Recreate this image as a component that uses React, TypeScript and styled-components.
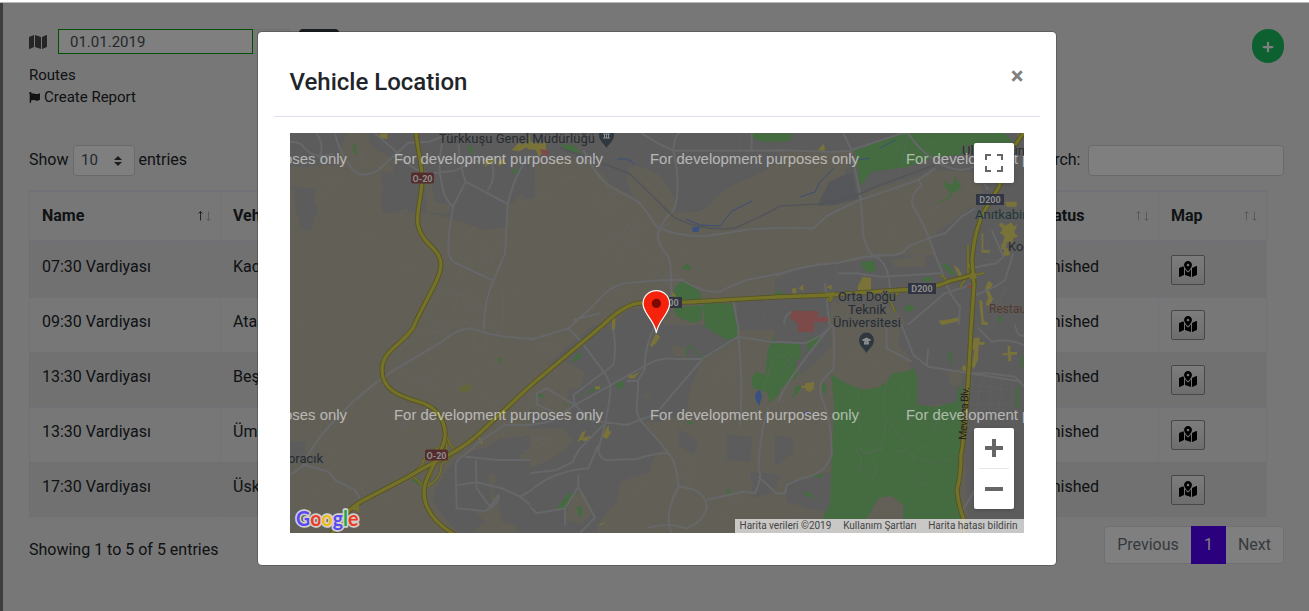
import React from 'react';
import styled, { createGlobalStyle, css } from 'styled-components';
import { FaMap, FaFlag, FaPlus, FaMapMarkedAlt } from 'react-icons/fa';

const GlobalStyle = createGlobalStyle`
  *, *::before, *::after { box-sizing: border-box; }
  html, body { margin: 0; height: 611px; overflow: hidden; }
  body {
    font-family: Roboto, 'Liberation Sans', sans-serif;
    font-size: 16px;
    line-height: 24px;
    color: #212529;
    background: #fff;
  }
`;

const Screen = styled.div`
  display: flex;
  flex-direction: column;
  width: 1309px;
  height: 611px;
  border-top: 2px solid #fff;
`;

const Frame = styled.div`
  position: relative;
  flex: 1;
  display: flex;
  border-top: 1px solid #b9b9b9;
  overflow: hidden;
`;

const Rail = styled.div`
  width: 3px;
  background: #7c7a78;
`;

const Page = styled.main`
  flex: 1;
  padding: 26px 25px 0 26px;
  background: #efefef;
`;

const TopRow = styled.div`
  display: flex;
  justify-content: space-between;
  align-items: flex-start;
  height: 34px;
`;

const DateGroup = styled.div`
  display: flex;
  align-items: flex-start;
`;

const MapGlyph = styled(FaMap)`
  width: 18px;
  height: 16px;
  margin: 5px 11px 0 0;
  color: #4a4a4c;
`;

const DateInput = styled.div`
  width: 195px;
  height: 25px;
  padding: 0 11px;
  border: 1px solid #00a000;
  background: #fff;
  color: #495057;
  font-size: 15px;
  line-height: 24px;
`;

const DateAddon = styled.div`
  width: 37px;
  height: 25px;
  border: 1px solid #dcdde6;
  border-left: 0;
`;

const DarkButton = styled.div`
  width: 40px;
  height: 25px;
  margin-left: 9px;
  border-radius: 4px;
  background: #343a40;
`;

const AddButton = styled.button`
  display: flex;
  align-items: center;
  justify-content: center;
  width: 32px;
  height: 34px;
  padding: 2px 0 0;
  border: 0;
  border-radius: 17px;
  background: #1ac15f;
  color: #fff;
  font-size: 12px;
`;

const Menu = styled.div`
  padding-top: 1px;
`;

const MenuLine = styled.div`
  display: flex;
  align-items: center;
  gap: 4px;
  height: 22px;
  font-size: 15px;
`;

const FlagGlyph = styled(FaFlag)`
  width: 11px;
  height: 11px;
`;

const Controls = styled.div`
  display: flex;
  justify-content: space-between;
  align-items: flex-start;
  height: 31px;
  margin-top: 37px;
  line-height: 29px;
`;

const Field = styled.label<{ $gap: number }>`
  display: flex;
  gap: ${p => p.$gap}px;
  height: 31px;
`;

const LengthSelect = styled.span`
  display: flex;
  align-items: center;
  justify-content: space-between;
  width: 62px;
  height: 31px;
  margin-right: -1px;
  padding: 0 12px 0 7px;
  border: 1px solid #ced4da;
  border-radius: 4px;
  background: #fff;
  color: #495057;
  font-size: 15px;
`;

const SearchBox = styled.span`
  width: 196px;
  height: 31px;
  border: 1px solid #ced4da;
  border-radius: 4px;
  background: #fff;
`;

const Table = styled.table`
  width: 1238px;
  margin-top: 14px;
  table-layout: fixed;
  border-collapse: separate;
  border-spacing: 0;
  border: 1px solid #e3e3ef;
  border-width: 1px 1px 0 0;
`;

const HeadCell = styled.th<{ $w: number }>`
  width: ${p => p.$w}px;
  height: 51px;
  padding: 0 8px 1px 12px;
  border: solid #e3e3ef;
  border-width: 1px 0 2px 1px;
  text-align: left;
  font-weight: 700;
`;

const HeadInner = styled.div`
  display: flex;
  align-items: center;
  justify-content: space-between;
`;

const Cell = styled.td<{ $inset?: number }>`
  height: 55px;
  padding: 12px 12px 0 ${p => p.$inset ?? 12}px;
  vertical-align: top;
  border: solid #e3e3ef;
  border-width: 1px 0 0 1px;
  white-space: nowrap;
`;

const Row = styled.tr<{ $striped: boolean }>`
  ${p => p.$striped && css`
    background: #e3e3e3;
    ${Cell} { border-color: #e1e1e4; }
  `}
`;

const MapButton = styled.button`
  display: flex;
  align-items: center;
  justify-content: center;
  width: 34px;
  height: 30px;
  margin: 0;
  padding: 0;
  border: 1px solid #8f8f8f;
  border-radius: 2px;
  background: linear-gradient(#f8f8f8, #dcdcdc);
  color: #000;
  svg { width: 18px; height: 16px; margin-top: -2px; }
`;

const Footer = styled.div`
  display: flex;
  justify-content: space-between;
  align-items: flex-start;
  margin-top: 9px;
`;

const Info = styled.div`
  padding-top: 12px;
`;

const Pager = styled.div`
  display: flex;
  height: 38px;
`;

const PageLink = styled.div<{ $active?: boolean; $w: number; $side?: 'left' | 'right' }>`
  width: ${p => p.$w}px;
  height: 38px;
  border: 1px solid #dee0ea;
  border-left-width: ${p => (p.$side === 'left' ? 1 : 0)}px;
  border-right-width: ${p => (p.$side === 'right' ? 1 : 0)}px;
  border-radius: ${p => (p.$side === 'left' ? '4px 0 0 4px' : p.$side === 'right' ? '0 4px 4px 0' : '0')};
  background: #fff;
  color: #6c757d;
  text-align: center;
  line-height: 36px;
  ${p => p.$active && css`
    background: #5600ff;
    border-color: #5600ff;
    color: #fff;
  `}
`;

const Backdrop = styled.div`
  position: absolute;
  inset: 0;
  display: flex;
  align-items: flex-start;
  padding: 28px 0 0 257px;
  background: rgba(0, 0, 0, 0.5);
`;

const Modal = styled.section`
  width: 800px;
  padding: 16px;
  background: #fff;
  background-clip: padding-box;
  border: 1px solid rgba(0, 0, 0, 0.2);
  border-radius: 5px;
`;

const ModalHeader = styled.header`
  display: flex;
  justify-content: space-between;
  height: 69px;
  padding: 16px;
  border-bottom: 1px solid #dfe0ea;
`;

const ModalTitle = styled.h4`
  margin: 0 0 0 -0.5px;
  font-size: 24px;
  font-weight: 500;
  line-height: 36px;
`;

const CloseButton = styled.span`
  margin-right: 0.5px;
  font-size: 24px;
  font-weight: 700;
  line-height: 24px;
  color: #808080;
`;

const ModalBody = styled.div`
  padding: 16px;
`;

const MapArea = styled.div`
  position: relative;
  width: 734px;
  height: 400px;
  overflow: hidden;
`;

const MapSvg = styled.svg`
  display: block;
`;

const MapControl = styled.div<{ $top: number; $h: number }>`
  position: absolute;
  right: 10px;
  top: ${p => p.$top}px;
  width: 40px;
  height: ${p => p.$h}px;
  display: flex;
  flex-direction: column;
  align-items: center;
  justify-content: center;
  background: #fff;
  border-radius: 2px;
  box-shadow: 0 1px 4px -1px rgba(0, 0, 0, 0.3);
`;

const ZoomStep = styled.div`
  display: flex;
  align-items: center;
  justify-content: center;
  width: 30px;
  height: 40px;
  & + & { border-top: 1px solid #e6e6e6; height: 41px; }
`;

const Attribution = styled.div`
  position: absolute;
  right: 0;
  bottom: 0;
  display: flex;
  align-items: center;
  justify-content: space-between;
  width: 289px;
  height: 14px;
  padding: 0 6.5px 0 4.5px;
  background: rgba(245, 245, 245, 0.7);
  color: #444;
  font-size: 10px;
  line-height: 14px;
  white-space: nowrap;
`;

const SortIcon = ({ asc = false }: { asc?: boolean }) => (
  <svg width="15" height="14" viewBox="0 0 15 14" fill="none" strokeWidth="1">
    <path d="M3.5 11.5V2.5M1.5 4.5l2-2 2 2" stroke={asc ? '#44444e' : '#b4b4ba'} />
    <path d="M11.5 2.5v9M9.5 9.5l2 2 2-2" stroke="#b4b4ba" />
  </svg>
);

type Sector = {
  x: number;
  y: number;
  urban: string[];
  land?: string[];
  park: string[];
  patch?: string[];
  roads: string[];
  streets: string[];
};

/* The map is stored as six sectors, each drawn at three units per pixel. */
const sectors: Sector[] = [
  {
    x: 285, y: 130,
    urban: [
      'M15 10H750V200L715 210V185L690 212L665 230V290L600 300L540 280L440 250H380L360 235L330 250H290L292 130L270 115L200 115H95V170L50 165L15 180Z',
      'M30 165L95 170L85 210L100 235L75 300L50 297L30 230Z',
    ],
    land: ['M185 10H245L260 50L330 90L325 130L200 118L150 110L165 60ZM15 110L60 112L120 105L190 118L190 175H60L15 170ZM415 120L435 130L450 215L505 225L490 250L425 248Z'],
    park: ['M205 40l8 0 0 20 8 12-8 2-8-10zM550 48h12l2 22h-12zM685 118h15v12h-18z'],
    patch: ['M285 12l22-2 0 18-25-6zM600 85l20-5 10 12-30 18zM640 95l15-10 5 14-20 10zM680 60l15-15 5-8 15 8-5-20 25-10 12 12-2 45-20-20-22 12z'],
    roads: [
      'M15 35Q50 35 58 55L80 72Q115 85 145 70',
      'M95 10Q120 50 102 85M150 10Q160 60 200 115Q230 150 280 120L370 38L430 36L500 10',
      'M270 10L345 75Q370 120 440 130L510 122Q570 90 640 78',
      'M475 30Q455 90 470 160Q480 215 505 228',
      'M520 40Q525 110 542 155L668 222Q695 110 750 60M542 155L505 228Q490 300 490 360Q492 395 525 405L625 452L660 372L668 222',
      'M607 183Q635 145 620 95M625 452Q595 520 597 600',
    ],
    streets: [
      'M30 120l25-12 10 15M100 150l30-10 30 20 25-12M105 195l12-8 5 16 18-8M120 165l30 12 15-20M290 190l12-28M370 235l-30 30',
      'M217 312v12h55v-16M105 335l16 12-4 45M345 400l28 24 12-18M55 570l-40 20M300 265v30h-18M625 452L655 480L657 600',
      'M565 290l-18 32 170 42M580 345l-40 75M610 320l-35 120M640 340l-38 90M548 375l100 35M530 410l-22 50M465 485l135 20M520 480l-15 80M560 490l-35 110M680 470l25 25M735 200l-25 40',
      'M425 570l40-90M440 590l60-20 70 12 60-8M470 600l10-40M535 480v60l80-12M670 510l45-15M225 60l20 60M205 90l35-10',
    ],
  },
  {
    x: 530, y: 130,
    urban: [
      'M0 10H750V95L690 130L610 165L570 190L530 235L500 245L430 250L440 215L390 135L330 108L295 112L290 160L310 200L240 160L190 100L100 80L0 110Z',
      'M220 600L300 538L400 535V600ZM620 515L750 505V600H620Z',
    ],
    park: [
      'M435 470Q450 450 480 458L512 490L515 515L475 520L430 515ZM430 535L505 525L520 530L515 570L490 580L440 560ZM520 520H605L625 600H525Z',
      'M90 42L130 45L155 70L110 62ZM668 10H750V35L700 35L668 25ZM455 412l20-12 10 18-22 2z',
    ],
    patch: ['M0 35h48v25l-22 20-8-20-18-2zM246 565h10v35h-10zM418 498l10-12 12 14z'],
    roads: [
      'M335 10Q390 45 430 62H750M430 62Q435 10 450 10M430 62Q455 170 432 240Q400 265 385 310Q375 330 415 380Q425 400 424 500',
      'M160 60Q190 130 240 170L325 215Q350 245 380 290Q440 320 530 318Q620 305 660 298L750 293',
      'M110 600Q200 520 215 500Q250 460 300 458L395 450H455Q520 490 570 485Q620 460 650 450L750 430',
      'M130 570l80-20M610 510L625 600M665 10v50',
    ],
    streets: [
      'M380 278q18 14 38 0q-6 18 4 34q-22-10-42 0q8-18 0-34zM383 275l36 38M419 275l-36 38M403 432q20 12 38 0q-6 16 2 34q-20-10-40 0q8-18 0-34zM405 430l36 36M441 430l-36 36',
      'M80 160l10-18 80-5M60 200l-55-15M200 220l20-60 50 60-28 40-40-30 50-20M160 90l-60-18M210 385l130-150M240 390l130-120M200 350l100-60 60 100M280 330l60 40M210 390l60-150M300 260l60 60M260 400l50-110M355 400l50-40-20 75-25-15M425 390l40-25 30 40M650 450l70-10-40 50',
      'M0 250l20 20M40 310l10 30M450 230l20 20M500 250l20-10M130 420l20-10M230 500l40-30 30 40M240 530l50-50M335 110l70 70M630 10v50M700 190l-40 40M640 540l60-20v60',
    ],
  },
  {
    x: 775, y: 130,
    urban: [
      'M0 10H747V600H400L380 560L340 530L170 515L160 600H0V450L80 410L240 395L330 375L480 375L495 420L430 260L600 230L620 220V130L480 120L370 165L240 210L200 150L240 60L130 70L0 60Z',
    ],
    land: ['M265 185L480 125H590V230L540 270L490 300L470 330L485 375L330 375L290 360L262 300ZM170 520L340 530L385 560L390 600H165ZM350 390L450 375V410H355Z'],
    park: [
      'M240 60Q350 15 390 10H690L720 45L640 50L560 75L480 80L400 110L290 125L255 170Z',
      'M510 150L520 162L533 163L540 138L547 155L558 160L556 175L540 190L530 182L528 200L512 212L480 220L515 205L525 190L518 180L508 168ZM260 395L298 393L303 420L285 430L262 415ZM500 405L515 400L540 430L528 435ZM445 442h26v12h-28zM385 535l15-12 20 12-18 12zM0 10H48V32L0 36ZM0 485h22v12H0zM665 570l8-12 10 5-12 18z',
    ],
    patch: [
      'M127 60l20-18 3 22zM248 470l15-30 25 3v40l-38 2zM52 475h12v15h-12zM70 475l15-12v20zM155 470l15-5v15zM160 510l15-22 12 10zM690 215h35v15h-30zM672 285l8-8 10 10 20-10 5 12 12-4-10 22 12 12-14 6-6 26-12-14-14 4 6-22-14-10 8-12zM680 340h16l-4 14 14 2-2 20-20 2 4-18-10-4zM620 310h5v50h20v8h-25zM535 405l15 10 20 35-15-4zM490 572l35-4 25-6v12l-20 4-30 8zM640 452l14 10-12 20 12 25-10 22-12-5 8-20-10-28zM612 510l10 2 4 60 14 8-10 20h-8zM728 12h15v12h-15z',
    ],
    roads: [
      'M0 60L170 66L225 62Q245 130 258 210L265 320Q280 375 310 385Q345 410 345 490',
      'M205 10L230 60L380 10L400 10Q430 60 480 90Q540 135 600 110',
      'M0 293L115 295L160 255L250 212L430 150L480 115M430 150L440 165Q400 200 415 230Q440 270 460 320L510 450Q520 490 555 530L550 600',
      'M0 437Q80 405 190 398L270 380L340 375Q380 380 400 350L460 325L510 310L560 260L600 235',
      'M190 430H240L320 440L500 430M620 150L640 180M665 400Q600 410 580 420M665 400L685 380L650 300M715 370L690 450Q650 480 600 495M720 365Q740 350 747 345',
      'M150 460L165 600M380 600L510 490L600 460M30 600Q20 560 50 545',
    ],
    streets: [
      'M60 270l25-30 40 10 10 35-45-10 5-40M320 280l20 10 25-20-5 55-20-15M460 240l30-8-10 20M300 240l40-20M390 380l70-8M300 530l40-5 30 50M610 420v-60h90M620 390h60M620 310v70M640 300v80M680 350h40M690 220v40M650 540l60-80M650 600l40-130M590 520v60M390 20l-60 90M430 30l60 70',
      'M580 90l60 20M450 30l50 20M274 364q18 14 40 2q-4 12 2 24q-20-8-42 2q6-14 0-28zM276 366l38 24M314 366l-38 24M180 395L190 460M230 400L260 440M400 10L360 200',
    ],
  },
  {
    x: 285, y: 325,
    urban: [
      'M580 372L515 400L475 450L442 520L465 560L520 624H750V330L650 340L600 370Z',
      'M15 350L60 350L60 380L35 400L15 400Z',
    ],
    land: ['M700 400L750 410V370L720 375ZM610 445L640 455L620 500L640 520L650 590L690 600L700 624H560L600 590L570 560L620 550Z'],
    park: ['M380 465L395 458L410 468L402 482ZM638 102l15-6-5 22z'],
    patch: ['M582 332l12 22-4 3-8-12z'],
    roads: [
      'M320 140L470 50Q520 10 560 10Q640 40 750 42M320 140Q200 220 110 330Q70 380 50 430',
      'M590 345L540 390Q510 400 512 430L515 550L600 558Q650 530 640 510L615 545L575 490L572 405M515 480L575 472L650 490L705 515L750 490M705 515L750 550M540 395L640 405L750 405',
      'M15 450L60 420L130 440L150 465L210 495L230 530',
      'M750 300L660 300L590 345',
    ],
    streets: [
      'M110 330L105 300M15 310L100 330M655 290v60M330 130l20-60 60-45M340 150l20-30 100-60M380 0l-50 90M410 30l90-20M420 50l40 40M470 0l-30 60M530 0v60M560 0l10 80M610 0l-10 90M650 0l-20 70M620 90l20 50-20 0M350 100l40 80 70-40M410 160l40 20M450 190l40-20M560 110l30 50M590 100v30M510 180l60-40M640 230l90-90M660 240l40-50M680 250l60-70M700 210l40 40M710 180l40 60M720 150l30 40',
      'M380 250l-30 60M330 325l50-30M70 515l20-12 20 15M140 600l10-40M230 480l10 30M250 480l-20 10M300 510l20 30M690 330l50 20M670 370l60 10M110 370l40 5M420 180v20M440 200v-15M580 210l40 20M600 250l40-20',
    ],
  },
  {
    x: 530, y: 325,
    urban: [
      'M230 0H520L620 45L515 105L480 190L470 260L390 290L345 290L400 370L370 400L360 440L270 470L260 530L225 570L200 600V624H0V395L55 470L0 500V250L60 280L130 280L100 150L20 170L60 110L190 0Z',
      'M590 330L665 335L660 410L590 405ZM445 310l60 40-15 40-45-30zM660 440l90 10-20 50-60 20z',
    ],
    land: ['M40 120L110 110L165 140L150 190L80 195L40 160ZM0 310L100 310L130 350L70 400L0 430ZM425 60L470 70L465 100L430 90ZM130 510L160 500L190 560L150 600L100 580ZM340 210l15-12 5 12-15 15z'],
    park: [
      'M518 0H625V35L590 45ZM715 70L750 0V205L720 235L710 200L670 190Q655 160 680 140L705 150ZM128 105l15-22 10 2-3 15-12 12zM255 180l15-12 12 5-8 22zM20 205l20 5 2 8-18-3zM120 220l40-8 28-22 5-8 5 12-35 15-40 10zM100 232l18 10h-12zM175 272l20 15-15 3zM112 510l18-10-10 25-20 25-25 5zM140 545l12-3 8 20-12 18zM470 288h18v10h-15zM590 480l10 20 12 6-22 4z',
    ],
    patch: [
      'M378 25L390 35L378 55L365 66L360 60ZM245 0h10v15h-10zM298 145l12 6 20-12-18 22-18-3zM195 185l15-2v10h-15zM142 350l15-30 10-2-8 20 20-5 5 8-20 8-10-5zM215 335l20-35 3 20 8-2-15 24zM208 600l15-8v4l-14 6z',
    ],
    roads: [
      'M0 45L115 10L150 45L225 145L242 180M250 10Q260 80 250 120L130 210L135 240L50 190L20 205L22 240L70 260',
      'M135 240L242 180L350 120Q390 95 440 102H515L625 35L750 55M625 35V0M625 35Q640 180 630 300',
      'M375 0Q340 80 345 130L325 165L320 260L330 285Q390 350 415 385Q440 410 445 485Q400 570 425 624M330 285Q380 270 400 240Q460 170 515 105',
      'M0 300L60 290L135 240L180 285L290 300L330 285M242 180Q240 230 225 300Q215 330 205 380Q215 408 235 405L320 402Q370 385 415 385M205 360L175 430Q60 440 0 500M220 300L150 370Q130 400 130 410L80 435L0 445',
      'M145 450V485L195 578L150 624M145 485L105 550V600M105 550L20 565L0 545',
      'M445 485Q530 490 530 550Q520 590 470 610L425 600M530 525L640 500L675 505Q700 450 685 430Q690 320 715 250M685 455L735 500M290 168L325 168M425 600Q380 600 350 610',
    ],
    streets: [
      'M60 110l20 40M80 90l30 30M0 330l60 20M10 350l70-20M0 375l40-15 20-30M40 160L55 190M0 80l60-30 30 40M20 70l20-20 40 40M290 460l15-10 10 12M330 510l-25-20-15 10M440 440l60 20-50 30M450 400l60 10M490 380v60M600 190v-60l30-20M560 220v50M730 100l-20 50 40 10M700 180l30-60M330 480l20-10v15M560 560l40 20M600 530l60-10M650 440l30 60M530 120l30 20-10 40M600 90l-20 60M480 450l-20 40',
    ],
  },
  {
    x: 775, y: 325,
    urban: [
      'M380 0H747V624H580L560 230L420 245L425 170L410 130L370 60ZM0 0H170V60L80 150L0 50Z',
      'M35 470L165 440V560L100 550L35 530ZM0 330L55 340V380L10 420H0Z',
    ],
    land: ['M515 140L560 130V180L530 185ZM165 0H340L370 60L415 110L335 140V180L270 190L180 160Z'],
    park: [
      'M168 145Q210 180 260 192Q310 195 335 170L350 145L400 138L415 128L426 150V240L480 245L545 230L550 190L562 180L560 380L548 490L565 560V582H385L385 540L350 512L310 520L275 582H145L150 565L165 540L170 390L178 240Z',
      'M0 55L75 55L80 95L60 110L70 150L0 205ZM100 40L145 30L130 60L95 80ZM52 220L60 185L80 180L75 195ZM135 180L145 168L155 190L150 210ZM82 500L110 505L115 525L100 515ZM100 455L145 445L140 458ZM518 90L530 75L528 125ZM725 185L733 180L733 245L722 250ZM736 100L745 90V130L738 125Z',
    ],
    patch: ['M90 175L117 170V190L105 202L92 195ZM78 182h14v6h-14zM596 40l18-3v14h15v8h-18l-2 45-12 28-7-10 8-45-8-5zM562 122h12v15h-12zM683 85h15v-22h8v18h20v8h-18v20h-8v-18h-17z'],
    roads: [
      'M0 50L90 55Q150 30 170 0M175 0Q180 70 175 130L145 165M170 0Q30 170 10 230M145 165Q130 180 140 220Q170 280 170 390Q150 450 80 460L35 480L30 505H0',
      'M380 0L415 90L460 125L740 170M335 0V70L410 110M455 120L460 70M720 0Q730 40 747 30M610 10L650 50Q700 40 747 60',
      'M560 560L610 480M580 145L640 145L720 155L747 185',
    ],
    streets: [
      'M600 145L580 200H650M600 180L700 195M710 160V270M620 150L600 280M650 150L640 300M680 160L670 270M570 240L710 235M145 165L60 170',
      'M250 190L255 330L320 370M430 330L420 310M345 160L380 180L405 230V330M365 380L400 375L410 390L440 360L470 370M410 390L415 410L380 460L360 500M410 390L440 405L480 415L530 400M405 460l20-15 5 20 20-10M430 480l20-5 5 15M200 410v50M250 550l50-60M230 100l20-40 20 60M330 90l40 20M280 80l30 60M455 290l25 20 20-10v40M490 240l-10 90M600 300l60 30M20 250l30 20M80 290l20 20M90 400l40-20M610 250h80M60 600l30-60M310 550l30-15 30 30M640 440l60 60M650 380l50 60M380 100l30-60',
      'M345 145L325 210V260L370 330L400 350L430 330M320 370L270 385Q240 350 245 380Q275 410 245 440L270 430L290 470L305 430L290 400M320 370L335 280M322 372L270 386Q240 350 246 381M20 70l30 20-20 30 30 20M0 90l40 10M10 150l40-30',
    ],
  },
];

const URBAN = '#5c5c5c';
const LAND = '#625f57';
const PARK = '#456b41';
const highways = [
  'M416 130C417 150 423 165 422 182C421 200 416 212 418 225C422 245 441 248 441 265C440 280 425 300 413 328C402 345 382 350 382 370C382 395 410 398 425 404C440 410 446 425 445 437C443 455 424 475 424 492C424 512 438 525 455 535',
  'M331 535Q345 510 362 501L408 477Q425 467 450 454Q466 446 482 431L530 386L603 325Q625 304 640 303L690 302L776 297L830 295L900 290Q930 290 950 281L973 275',
  'M1026 130Q1005 155 999 187L985 210Q974 230 972 260L974 285L971 330Q966 430 961 455Q961 475 957 490Q958 504 963 517L965 535',
];
const ramps = [
  'M445 425Q446 445 458 451M445 425L447 450M440 447Q424 455 422 465L410 476M420 470L412 476Q418 480 423 486M424 488Q442 480 441 465L452 455M432 474Q426 480 430 485',
  'M968 245v30l-8 12M940 275l12 8M974 275l10-2M822 292l8 9 6-8M885 290l7 10 8-10M890 300l5 12M968 262l5 14',
];

const watermarkX = [138, 394, 650, 906];

const Shield = ({ x, y, w, label, red }: { x: number; y: number; w: number; label: string; red?: boolean }) => (
  <g>
    <rect x={x} y={y} width={w} height={11} rx={red ? 2 : 0} fill={red ? '#552c2e' : '#313542'} />
    <text x={x + w / 2} y={y + 9} textAnchor="middle" fontSize="9" fontWeight="700" fill="#8e8e8c">{label}</text>
  </g>
);

const PlacePin = ({ x, y, glyph }: { x: number; y: number; glyph: React.ReactNode }) => (
  <g transform={`translate(${x} ${y})`}>
    <path d="M0 12C-2 8-7.5 5-7.5-1A7.5 7.5 0 0 1 7.5-1C7.5 5 2 8 0 12Z" fill="#30383f" />
    {glyph}
  </g>
);

const CityMap = () => (
  <MapSvg width="734" height="400" viewBox="290 133 734 400" fontFamily="Roboto, sans-serif">
    <rect x="290" y="133" width="734" height="400" fill={LAND} />
    {sectors.map(s => (
      <g key={`${s.x}-${s.y}`} transform={`translate(${s.x} ${s.y}) scale(0.33333)`}>
        <path d={s.urban.join('')} fill={URBAN} />
        {s.land && <path d={s.land.join('')} fill={LAND} />}
        <path d={s.park.join('')} fill={PARK} />
        {s.patch && <path d={s.patch.join('')} fill="#79733a" />}
        <path d={s.streets.join('')} fill="none" stroke="#68696a" strokeWidth="1.6" opacity="0.6" />
        <path d={s.roads.join('')} fill="none" stroke="#666768" strokeWidth="6" strokeLinejoin="round" />
      </g>
    ))}
    <path d="M817 206L829 182L852 172L858 199L835 205Z" fill="#55575a" />
    <path d="M459 388l8-4 6 2-5 6-7 1zM409 429l3-1-1 3z" fill="#64653b" />
    <g fill="none">
      <path d="M560 148Q600 162 630 174L675 218Q705 232 735 228Q765 215 780 206L820 204Q850 200 880 185L935 165" stroke="#535559" strokeWidth="1.6" />
      <path d="M617 159l10 0 8 5M686 219l14 6 20 1 12-15 20-10M800 197l15-5 5-10 14-14M858 160l12-2M880 148l15-8" stroke="#3b4e78" strokeWidth="1" />
    </g>
    <path d="M692 227h8l-2 5h-5zM756 392l4-2 2 6-3 10-4-8zM803 414l4-3 2 3-4 0z" fill="#3a4f82" />
    <path d="M792 311h26v6h10v5h-14v10h-16v-8l-8-6zM540 149l9 2-1 5-6-1zM967 285h5v3h-4z" fill="#7d4a4a" />
    <path d="M686 356q0-10 5-10l11 12" fill="none" stroke={PARK} strokeWidth="1.5" />
    <g fill="none" stroke="#5d5a24" strokeWidth="2.6"><path d={ramps.join('')} /></g>
    <g fill="none" stroke="#747331" strokeWidth="1.5"><path d={ramps.join('')} /></g>
    <g fill="none" stroke="#555222">{highways.map(d => <path key={d} d={d} strokeWidth="5" />)}</g>
    <g fill="none" stroke="#747129">{highways.map(d => <path key={d} d={d} strokeWidth="3.3" />)}</g>
    <circle cx="973" cy="276" r="3.6" fill="#747129" />
    <path d="M350 510l9-7v10l-4-3zM825 293l10-1-4 7z" fill="#747129" />

    <Shield x={411} y={172.5} w={23} label="O-20" red />
    <Shield x={425} y={449.5} w={23} label="O-20" red />
    <Shield x={654} y={297} w={28} label="D200" />
    <Shield x={908} y={283} w={28} label="D200" />
    <Shield x={976} y={194} w={28} label="D200" />

    <g fill="#272c31" fontSize="13" stroke="#5e5e5c" strokeWidth="1.4" paintOrder="stroke">
      <text x="439" y="143.4" textLength="156">Türkkuşu Genel Müdürlüğü</text>
      <text x="867" y="301.4" textAnchor="middle" textLength="58">Orta Doğu</text>
      <text x="867" y="314.4" textAnchor="middle" textLength="38">Teknik</text>
      <text x="867" y="327.4" textAnchor="middle" textLength="68">Üniversitesi</text>
      <text x="288" y="463.4" textLength="35">oracık</text>
      <text x="962" y="155.4" textLength="63">Ulus Bütün</text>
      <text x="975" y="219.4" fill="#22363a">Anıtkabir</text>
      <text x="1008" y="251.4">Kocatepe</text>
      <text x="989" y="313.4" fontSize="12" fill="#54382f">Restaurant</text>
    </g>
    <text transform="translate(966 440) rotate(-87)" fontSize="10.5" textLength="53" fill="#241f1c">Mevlana Blv.</text>
    <PlacePin x={606.5} y={136} glyph={<path d="M-3.5-2h7M-2-2v4M0-2v4M2-2v4M-3.5 2h7" stroke="#8a8e90" fill="none" />} />
    <PlacePin x={866.5} y={341} glyph={<path d="M-5-1L0-3.5 5-1 0 1.5ZM-2.5 1v2.5h5V1" fill="#8a8e90" />} />

    <g fontFamily="Liberation Sans, sans-serif" fontSize="14.93" fill="#fff" opacity="0.55">
      {[164, 420].map(y => watermarkX.map(x => (
        <text key={`${x}-${y}`} x={x} y={y}>For development purposes only</text>
      )))}
    </g>

    <path d="M656.3 333C655 320 643 314 643 303.8A13.3 13.3 0 0 1 669.6 303.8C669.6 314 658 320 656.3 333Z" fill="#f5230b" stroke="#fff" strokeWidth="1.2" />
    <circle cx="656.4" cy="303.4" r="4.6" fill="#7d0a02" />

    <g fontFamily="Lato, sans-serif" fontSize="20.5" fontWeight="700" paintOrder="stroke" stroke="#d0d0cd" strokeWidth="3.4" strokeLinejoin="round">
      <text x="296" y="526" textLength="62.5" lengthAdjust="spacingAndGlyphs">
        <tspan fill="#5a48f5">G</tspan><tspan fill="#f03a24">o</tspan><tspan fill="#f2bd12">o</tspan><tspan fill="#5a48f5">g</tspan><tspan fill="#1ea548">l</tspan><tspan fill="#f03a24">e</tspan>
      </text>
    </g>
  </MapSvg>
);

const columns = [
  { label: 'Name', w: 191, asc: true },
  { label: 'Vehicle', w: 805 },
  { label: 'Status', w: 133 },
  { label: 'Map', w: 108 },
];

const rows = [
  ['07:30 Vardiyası', 'Kadıköy'],
  ['09:30 Vardiyası', 'Ataşehir'],
  ['13:30 Vardiyası', 'Beşiktaş'],
  ['13:30 Vardiyası', 'Ümraniye'],
  ['17:30 Vardiyası', 'Üsküdar'],
];

export default function App() {
  return (
    <Screen>
      <GlobalStyle />
      <Frame>
        <Rail />
        <Page>
          <TopRow>
            <DateGroup>
              <MapGlyph />
              <DateInput>01.01.2019</DateInput>
              <DateAddon />
              <DarkButton />
            </DateGroup>
            <AddButton><FaPlus /></AddButton>
          </TopRow>
          <Menu>
            <MenuLine>Routes</MenuLine>
            <MenuLine><FlagGlyph />Create Report</MenuLine>
          </Menu>
          <Controls>
            <Field $gap={4.5}>
              Show
              <LengthSelect>
                10
                <svg width="8" height="10" viewBox="0 0 8 10" fill="#343a40"><path d="M4 0l4 4H0zM4 10L0 6h8z" /></svg>
              </LengthSelect>
              entries
            </Field>
            <Field $gap={7.5}>Search:<SearchBox /></Field>
          </Controls>
          <Table>
            <thead>
              <tr>
                {columns.map(c => (
                  <HeadCell key={c.label} $w={c.w}>
                    <HeadInner>{c.label}<SortIcon asc={c.asc} /></HeadInner>
                  </HeadCell>
                ))}
              </tr>
            </thead>
            <tbody>
              {rows.map(([name, vehicle], i) => (
                <Row key={i} $striped={i % 2 === 0}>
                  <Cell>{name}</Cell>
                  <Cell>{vehicle}</Cell>
                  <Cell $inset={13}>Finished</Cell>
                  <Cell><MapButton><FaMapMarkedAlt /></MapButton></Cell>
                </Row>
              ))}
            </tbody>
          </Table>
          <Footer>
            <Info>Showing 1 to 5 of 5 entries</Info>
            <Pager>
              <PageLink $w={87} $side="left">Previous</PageLink>
              <PageLink $w={35} $active>1</PageLink>
              <PageLink $w={58} $side="right">Next</PageLink>
            </Pager>
          </Footer>
        </Page>
        <Backdrop>
          <Modal>
            <ModalHeader>
              <ModalTitle>Vehicle Location</ModalTitle>
              <CloseButton>×</CloseButton>
            </ModalHeader>
            <ModalBody>
              <MapArea>
                <CityMap />
                <MapControl $top={10} $h={40}>
                  <svg width="18" height="18" viewBox="0 0 18 18" fill="#666"><path d="M0 0v6h2V2h4V0zM12 0v2h4v4h2V0zM16 16h-4v2h6v-6h-2zM2 12H0v6h6v-2H2z" /></svg>
                </MapControl>
                <MapControl $top={295} $h={81}>
                  <ZoomStep><svg width="18" height="18" viewBox="0 0 18 18" fill="#666"><path d="M7 0h4v7h7v4h-7v7H7v-7H0V7h7z" /></svg></ZoomStep>
                  <ZoomStep><svg width="18" height="18" viewBox="0 0 18 18" fill="#666"><path d="M0 7h18v4H0z" /></svg></ZoomStep>
                </MapControl>
                <Attribution>
                  <span>Harita verileri ©2019</span>
                  <span>Kullanım Şartları</span>
                  <span>Harita hatası bildirin</span>
                </Attribution>
              </MapArea>
            </ModalBody>
          </Modal>
        </Backdrop>
      </Frame>
    </Screen>
  );
}
